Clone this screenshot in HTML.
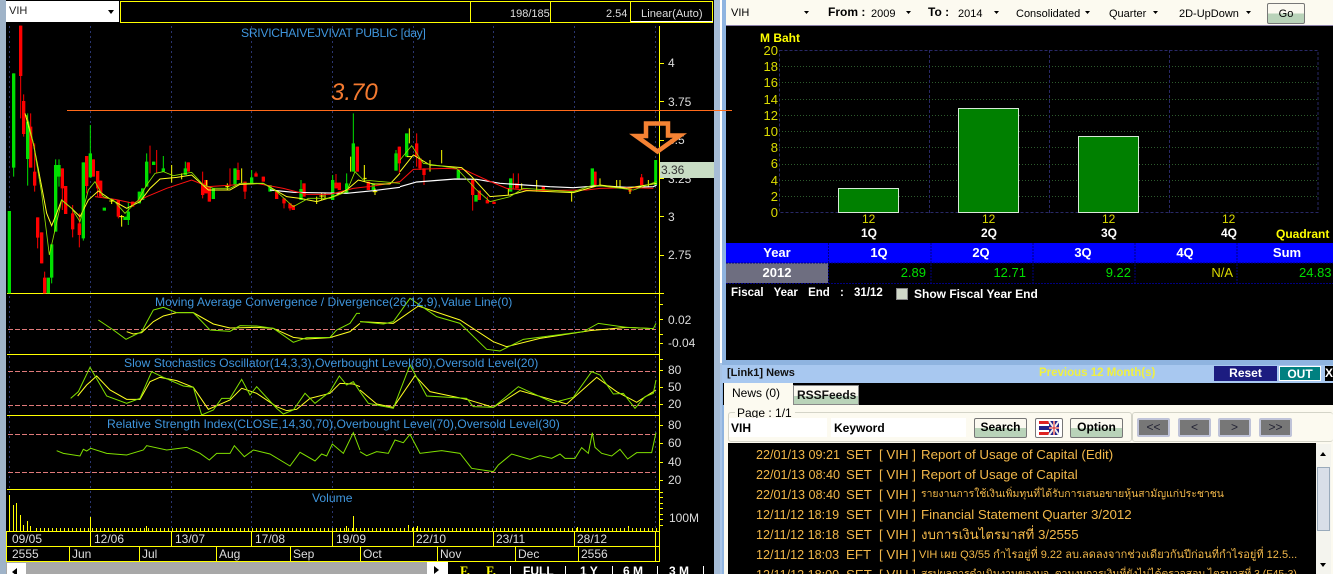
<!DOCTYPE html>
<html><head><meta charset="utf-8"><style>
html,body{margin:0;padding:0;background:#a8c4e6}
#r{position:relative;width:1333px;height:574px;overflow:hidden;font-family:"Liberation Sans","DejaVu Sans","Noto Sans CJK SC",sans-serif;font-size:12px;color:#000}
.a{position:absolute}
.t{position:absolute;white-space:nowrap;line-height:14px}
.b{font-weight:bold}
.ax{color:#ddd;font-size:12px}
.cap{color:#3f95dc;font-size:12.15px}
.y{color:#dcdc00;font-size:13px;width:24px;text-align:right}
.btn{position:absolute;box-sizing:border-box;border:1px solid #777;border-radius:2px;background:linear-gradient(#fbf9f0 50%,#b9d3b9 50%);text-align:center;font-weight:bold;line-height:17px;font-size:12px;height:20px}
.nav{position:absolute;box-sizing:border-box;top:418px;width:33px;height:19px;border:2px solid #bfc3d8;border-radius:2px;background:#777;color:#223;text-align:center;line-height:14px;font-size:12px}
.rw{position:absolute;left:0;color:#f2b84a;font-size:13.3px;white-space:nowrap;line-height:16px;height:16px}
.rw span{position:absolute;top:0}
.rw .d{left:756px;font-size:12.6px}
.c{position:absolute;box-sizing:border-box;height:20px;line-height:20px;text-align:center;color:#fff;font-weight:bold;font-size:13px}
</style></head><body><div id="r">

<!-- left pane -->
<div class="a" style="left:0;top:0;width:6px;height:574px;background:#9fb3c8"></div>
<div class="a" style="left:6px;top:0;width:708px;height:574px;background:#000"></div>
<div class="a" style="left:714px;top:0;width:6px;height:574px;background:#a6bcd6"></div>
<div class="a" style="left:720px;top:0;width:2px;height:363px;background:#fff"></div>
<div class="a" style="left:722px;top:0;width:4px;height:574px;background:#8fb4e0"></div>

<!-- symbol combo -->
<div class="a" style="left:6px;top:1px;width:113px;height:21px;background:#fff"></div>
<div class="t" style="left:9px;top:4px;font-size:11px;color:#222">VIH</div>
<div class="a" style="left:108px;top:10px;border:3.5px solid transparent;border-top:4px solid #000;border-bottom:0"></div>
<!-- top toolbar -->
<div class="a" style="left:120px;top:1px;width:593px;height:22px;box-sizing:border-box;border:1px solid #ff0"></div>
<div class="a" style="left:470px;top:1px;width:1px;height:22px;background:#ff0"></div>
<div class="a" style="left:550px;top:1px;width:1px;height:22px;background:#ff0"></div>
<div class="a" style="left:630px;top:1px;width:1px;height:22px;background:#ff0"></div>
<div class="a" style="left:631px;top:21px;width:82px;height:1px;background:#fff"></div>
<div class="t" style="left:510px;top:7px;color:#ddd;font-size:11px">198/185</div>
<div class="t" style="left:606px;top:7px;color:#ddd;font-size:11px">2.54</div>
<div class="t" style="left:641px;top:7px;color:#ddd;font-size:11.2px">Linear(Auto)</div>

<!-- chart svg -->
<svg class="a" style="left:0;top:0" width="733" height="574" viewBox="0 0 733 574" fill="none">
<g stroke="#2a3570" stroke-width="1" stroke-dasharray="2 3">
<path d="M9.5 26V531M90.5 26V531M171.5 26V531M251.500 26V531M332.500 26V531M413.500 26V531M493.500 26V531M574.500 26V531M655.500 26V531"/>
</g>
<!-- frame lines -->
<g stroke="#ff0" stroke-width="1">
<path d="M7 293.5H659M7 354.5H659M7 415.5H659M7 489.5H659M7 531.5H659M7 546.5H659M7 561.5H659M6.5 531V562M659.5 26V562"/>
<path d="M90.5 531V546M171.5 531V546M251.5 531V546M332.5 531V546M413.5 531V546M493.5 531V546M574.5 531V546M655.5 531V561"/>
<path d="M69.5 546V561M139.5 546V561M216.5 546V561M290.5 546V561M360.5 546V561M437.5 546V561M515.5 546V561M578.5 546V561"/>
<path d="M659 63.5H664M659 101.5H664M659 140.5H664M659 178.5H664M659 216.5H664M659 255.5H664M659 293.5H664M659 304.5H663M659 319.5H663M659 334.5H663M659 343.5H663M659 359.5H663M659 370.5H663M659 387.5H663M659 404.5H663M659 425.5H663M659 443.5H663M659 462.5H663M659 480.5H663M659 492.5H663M659 497.5H663M659 503.5H663M659 508.5H663M659 514.5H663M659 519.5H663M659 525.5H663"/>
</g>
<!-- dashed levels -->
<g stroke="#e07a7a" stroke-width="1" stroke-dasharray="5 2">
<path d="M8 329.5H656M8 371.5H656M8 405.5H656M8 434.5H656M8 472.5H656"/>
</g>
<!-- volume -->
<path d="M36 529.5H657" stroke="#ff0" stroke-width="3" stroke-dasharray="1 3"/>
<path d="M9.5 495V531M13.5 505V531M16.5 503V531M20.5 515V531M23.5 525V531M27.5 521V531M30.5 526V531M90.5 517V531M146.5 526V531M353.5 516V531M346.5 526V531M413.5 527V531M408.5 525V531M417.5 526V531M628.5 526V531M577.5 527V531" stroke="#ff0" stroke-width="1"/>

<!-- candles left half, zoom coords -->
<g transform="scale(.33333)">
<g stroke="#ff0000" stroke-width="3">
<path d="M62 77V355M71 283V410M92 340V503M104 430V575M113 652V745M125 697V790M134 815V880M187 505V630M197 558V642M218 615V712M238 640V742M260 468V580M280 478V530M293 513V590M302 542V590M355 600V655M398 605V620M450 437V520M470 450V520M565 487V515M608 515V595M628 560V605M618 540V580M735 545V597M714 488V540M690 505V560M768 515V530M790 530V545M830 575V597M852 595V625M870 610V632M880 615V630M912 550V590M1008 522V565M1018 548V570M1072 440V515M1105 545V570M1198 440V520"/>
</g>
<g stroke="#ff0000" stroke-width="10">
<path d="M62 77V228M71 303V402M92 380V503M104 515V557M113 652V713M125 697V790M134 833V880M187 505V565M197 558V642M218 640V688M238 670V705M260 468V558M280 478V530M293 513V565M302 542V590M355 600V650M398 605V620M565 487V515M608 550V585M628 560V605M618 540V580M735 545V575M714 510V540M768 520V530M790 530V545M830 575V597M852 595V610M870 610V625M880 615V630M912 550V590M1008 548V565M1018 548V570M1072 440V515M1105 545V570M1198 440V490"/>
</g>
<g stroke="#00e000" stroke-width="3">
<path d="M41 220V530M83 340V557M155 733V850M167 478V695M177 478V560M250 487V722M271 375V532M385 605V675M418 575V610M428 565V600M440 460V560M461 485V495M490 468V515M556 485V525M640 565V597M705 505V555M755 510V552M810 555V575M903 540V600M998 525V600M1040 520V580M1060 340V515M1120 550V570M1188 450V512"/>
</g>
<g stroke="#00e000" stroke-width="10">
<path d="M28 633V880M41 220V503M83 365V477M145 833V880M155 733V833M167 495V695M177 495V530M250 487V715M271 460V532M313 623V632M375 650V660M385 635V660M418 575V610M428 565V600M440 485V560M461 485V495M490 505V515M556 505V525M640 565V597M705 505V555M755 532V552M810 555V575M903 567V600M998 540V600M1040 550V580M1060 430V515M1120 550V570M1188 460V512"/>
</g>
<g stroke="#ff0" stroke-width="3">
<path d="M365 645V680M358 650H372M335 595V612M328 603H342M682 550V570M676 560H688M965 578V600M958 588H972M1125 565V585M1118 575H1132M1052 470V515M1093 495V545M725 505V550M975 580V595M1090 535H1100M515 495V548M545 520V538M620 540V560M950 590V612"/>
</g>
<!-- MAs -->
<path d="M810 570L880 577L1040 580L1120 572L1200 562" stroke="#fff" stroke-width="3.5"/>
<path d="M285 590L345 598L400 610L440 590L500 565L575 540L625 560L700 555L770 550L850 565L920 583L990 583L1060 565L1120 558L1200 545" stroke="#ff1010" stroke-width="3"/>
<path d="M75 340L100 430L125 560L140 640L155 677L170 640L185 600L215 625L240 650L265 600L295 573L330 597L380 625L420 605L450 565L480 537L530 532L575 525L625 570L690 570L720 553L790 550L860 590L900 595L950 605L1000 590L1040 570L1075 540L1120 552L1170 552L1200 520" stroke="#ffff20" stroke-width="3"/>
<path d="M80 345L100 430L125 580L148 765L165 690L185 600L215 625L240 665L265 570L285 545L310 590L340 600L375 640L415 600L440 555L465 520L490 515L520 527L575 517L610 555L640 565L690 565L720 550L790 550L830 575L880 620L925 595L990 595L1040 575L1065 515L1090 540L1200 550" stroke="#90e000" stroke-width="2.5"/>

<!-- indicators, left half of zoom 3 -->
<g transform="translate(0,870)" stroke-width="3">
<path d="M380 125L400 132L425 128L460 95L490 78L530 68L580 68L640 102L690 114L770 112L820 115L880 142L920 147L990 143L1050 125L1080 100" stroke="#ffff20"/>
<path d="M295 90L340 120L378 148L425 125L460 60L490 52L530 68L580 68L630 120L690 124L720 107L770 108L820 115L880 157L920 143L990 142L1010 120L1050 100L1070 70L1080 70" stroke="#80e000"/>
<path d="M233 318L260 285L290 258L330 300L380 328L420 328L450 275L480 262L530 272L580 292L625 358L690 330L725 295L770 310L830 350L860 362L890 358L930 325L990 310L1020 280L1060 282L1080 290" stroke="#ffff20"/>
<path d="M212 325L235 305L270 232L320 318L380 340L420 325L455 245L490 262L550 288L580 292L605 375L640 360L665 325L690 325L725 268L750 315L770 290L830 355L850 372L880 360L915 310L945 340L990 305L1018 258L1040 285L1060 275L1080 305" stroke="#80e000"/>
<path d="M170 482L190 490L240 498L250 478L260 483L272 475L320 490L380 495L430 480L440 467L500 480L560 472L600 490L628 510L650 490L690 490L703 467L733 500L760 480L810 492L870 528L900 487L945 513L965 492L980 498L997 462L1030 490L1060 428L1080 480" stroke="#80e000"/>
</g>
</g>
<g transform="translate(360,290) scale(.33333)" stroke-width="3">
<path d="M0 95L100 100L175 48L300 90L400 155L440 170L540 145L690 122L800 112L880 116" stroke="#ffff20"/>
<path d="M0 95L70 102L100 95L150 25L230 80L300 100L380 178L420 183L490 148L670 125L715 100L800 112L880 116L888 100" stroke="#80e000"/>
<path d="M0 300L50 342L100 352L165 257L210 305L320 328L400 352L480 302L620 342L710 262L770 305L830 337L880 305L888 300" stroke="#ffff20"/>
<path d="M0 305L25 340L100 355L150 225L200 318L320 325L340 350L400 352L475 290L580 338L640 322L695 245L720 255L760 312L790 310L825 355L855 320L880 310L888 270" stroke="#80e000"/>
<path d="M0 485L20 497L50 485L85 490L105 450L130 458L150 433L180 490L245 482L300 490L335 535L400 545L415 525L455 492L510 508L540 497L575 505L600 492L615 505L645 505L665 473L685 490L697 428L705 472L725 490L755 498L780 478L803 507L830 488L875 488L888 428" stroke="#80e000"/>
</g>
<g transform="translate(400,0) scale(.33333)">
<g stroke="#ff0000" stroke-width="3"><path d="M50 400V500M60 475V510M72 505V555M218 540V632M238 572V600M262 590V610M282 605V612M340 520V565M355 520V565M430 558V575M585 515V555M725 522V555M690 565V580"/></g>
<g stroke="#ff0000" stroke-width="10"><path d="M50 430V470M60 475V505M72 505V525M218 540V585M238 572V600M262 600V610M282 605V612M350 550V565M430 558V575M585 515V555M725 532V555M690 565V575"/></g>
<g stroke="#00e000" stroke-width="10"><path d="M20 400V470M175 510V535M228 585V605M332 535V575M577 505V560"/></g>
<path d="M767 480V555" stroke="#00e000" stroke-width="9"/>
<g stroke="#ff0" stroke-width="3"><path d="M28 385V430M90 480V515M125 450V490M515 575V605M410 540V575M650 540V565M745 540V560M660 540V560M600 535V555M325 565V585M365 550V570M20 470H36M690 570V582"/></g>
<path d="M0 560L50 546L165 537L230 538L300 550L450 560L520 563L600 557L680 562L760 560L770 555" stroke="#fff" stroke-width="3.5"/>
<path d="M0 545L40 508L140 505L190 508L260 540L320 565L400 572L560 570L600 565L700 563L760 565" stroke="#ff1010" stroke-width="3"/>
<path d="M0 515L40 465L90 495L185 503L215 530L270 590L330 585L380 572L520 578L600 555L680 565L770 550" stroke="#ffff20" stroke-width="3"/>
<path d="M0 480L35 437L70 490L170 505L230 570L270 605L330 590L370 565L520 575L580 555L700 570L770 545" stroke="#90e000" stroke-width="2.5"/>
</g>
<!-- orange line -->
<path d="M67 110.5H732" stroke="#ff6a1a" stroke-width="1"/>
</svg>

<!-- labels -->
<div class="t cap" style="left:241px;top:26px;letter-spacing:-.28px">SRIVICHAIVEJVIVAT PUBLIC [day]</div>
<div class="t" style="left:331px;top:80px;font-size:24px;line-height:26px;font-style:italic;color:#f47a30">3.70</div>
<div class="t cap" style="left:155px;top:295px">Moving Average Convergence / Divergence(26,12,9),Value Line(0)</div>
<div class="t cap" style="left:124px;top:356px">Slow Stochastics Oscillator(14,3,3),Overbought Level(80),Oversold Level(20)</div>
<div class="t cap" style="left:107px;top:417px">Relative Strength Index(CLOSE,14,30,70),Overbought Level(70),Oversold Level(30)</div>
<div class="t cap" style="left:312px;top:491px">Volume</div>
<div class="t ax" style="left:668px;top:56px">4</div>
<div class="t ax" style="left:668px;top:95px">3.75</div>
<div class="t ax" style="left:668px;top:133px">3.5</div>
<div class="t ax" style="left:668px;top:210px">3</div>
<div class="t ax" style="left:668px;top:248px">2.75</div>
<div class="t ax" style="left:668px;top:172px">3.25</div>
<div class="a" style="left:660px;top:162px;width:54px;height:16px;background:#c8dcc4"></div>
<div class="t" style="left:661px;top:163px;color:#333">3.36</div>
<div class="t ax" style="left:668px;top:313px">0.02</div>
<div class="t ax" style="left:668px;top:336px">-0.04</div>
<div class="t ax" style="left:668px;top:363px">80</div>
<div class="t ax" style="left:668px;top:380px">50</div>
<div class="t ax" style="left:668px;top:397px">20</div>
<div class="t ax" style="left:668px;top:418px">80</div>
<div class="t ax" style="left:668px;top:436px">60</div>
<div class="t ax" style="left:668px;top:455px">40</div>
<div class="t ax" style="left:668px;top:473px">20</div>
<div class="t ax" style="left:669px;top:511px">100M</div>
<div class="t ax" style="left:12px;top:532px">09/05</div>
<div class="t ax" style="left:94px;top:532px">12/06</div>
<div class="t ax" style="left:175px;top:532px">13/07</div>
<div class="t ax" style="left:255px;top:532px">17/08</div>
<div class="t ax" style="left:336px;top:532px">19/09</div>
<div class="t ax" style="left:416px;top:532px">22/10</div>
<div class="t ax" style="left:496px;top:532px">23/11</div>
<div class="t ax" style="left:577px;top:532px">28/12</div>
<div class="t ax" style="left:12px;top:547px">2555</div>
<div class="t ax" style="left:72px;top:547px">Jun</div>
<div class="t ax" style="left:142px;top:547px">Jul</div>
<div class="t ax" style="left:219px;top:547px">Aug</div>
<div class="t ax" style="left:293px;top:547px">Sep</div>
<div class="t ax" style="left:363px;top:547px">Oct</div>
<div class="t ax" style="left:440px;top:547px">Nov</div>
<div class="t ax" style="left:518px;top:547px">Dec</div>
<div class="t ax" style="left:581px;top:547px">2556</div>

<!-- arrow -->
<svg class="a" style="left:625px;top:115px" width="70" height="45" fill="none"><path d="M21 8.500H43V20.500H55L32.500 36.500L11 21H21Z" stroke="#f58233" stroke-width="4.500"/></svg>

<!-- scrollbar + bottom toolbar -->
<div class="a" style="left:6px;top:562px;width:421px;height:12px;background:#a8a8a8"></div>
<div class="a" style="left:7px;top:563px;width:19px;height:11px;background:#fff"></div>
<div class="a" style="left:12px;top:568px;border:4px solid transparent;border-right:5px solid #000;border-left:0"></div>
<div class="a" style="left:427px;top:562px;width:21px;height:12px;background:#fff"></div>
<div class="a" style="left:434px;top:566px;border:4px solid transparent;border-left:5px solid #000;border-right:0"></div>
<div class="t b" style="left:460px;top:563px;color:#ff0;font:bold 13px 'Liberation Serif',serif">F.</div>
<div class="t b" style="left:486px;top:563px;color:#ff0;font:bold 13px 'Liberation Serif',serif">F.</div>
<div class="t b" style="left:523px;top:564px;color:#fff">FULL</div>
<div class="t b" style="left:580px;top:564px;color:#fff">1 Y</div>
<div class="t b" style="left:623px;top:564px;color:#fff">6 M</div>
<div class="t b" style="left:669px;top:564px;color:#fff">3 M</div>
<div class="a" style="left:510px;top:566px;width:1px;height:8px;background:#fff"></div>
<div class="a" style="left:565px;top:566px;width:1px;height:8px;background:#fff"></div>
<div class="a" style="left:612px;top:566px;width:1px;height:8px;background:#fff"></div>
<div class="a" style="left:657px;top:566px;width:1px;height:8px;background:#fff"></div>
<div class="a" style="left:703px;top:566px;width:1px;height:8px;background:#fff"></div>

<!-- right pane -->
<div class="a" style="left:726px;top:0;width:607px;height:360px;background:#000"></div>
<div class="a" style="left:722px;top:110px;width:10px;height:1px;background:#ff6a1a"></div>
<div class="a" style="left:726px;top:0;width:607px;height:26px;background:#fcfaf0"></div>
<div class="a" style="left:726px;top:25px;width:607px;height:1px;background:#8a7fa8"></div>
<div class="t" style="left:731px;top:6px;font-size:11px">VIH</div>
<div class="t b" style="left:828px;top:5px;font-size:12px">From :</div>
<div class="t" style="left:871px;top:7px;font-size:11px">2009</div>
<div class="t b" style="left:928px;top:5px;font-size:12px">To :</div>
<div class="t" style="left:958px;top:7px;font-size:11px">2014</div>
<div class="t" style="left:1016px;top:7px;font-size:11px">Consolidated</div>
<div class="t" style="left:1109px;top:7px;font-size:11px">Quarter</div>
<div class="t" style="left:1179px;top:7px;font-size:11px">2D-UpDown</div>
<svg class="a" style="left:726px;top:0" width="607" height="26"><path d="M79 11h5l-2.500 3zM181 11h5l-2.500 3zM269 11h5l-2.500 3zM360 11h5l-2.500 3zM428 11h5l-2.500 3zM521 11h5l-2.500 3z" fill="#000" transform="translate(-1,0)"/></svg>
<div class="btn" style="left:1267px;top:3px;width:38px;font-weight:normal;font-size:11px;line-height:20px;height:21px">Go</div>

<!-- bar chart -->
<svg class="a" style="left:726px;top:26px" width="607" height="200" fill="none">
<g transform="translate(-726,-26)">
<g stroke="#2c5a2c" stroke-dasharray="1 2"><path d="M779 66.500H1318M779 82.500H1318M779 99.500H1318M779 115.500H1318M779 131.500H1318M779 147.500H1318M779 164.500H1318M779 180.500H1318M779 196.500H1318"/></g>
<g stroke="#282866" stroke-dasharray="3 2"><path d="M779.500 50.500H1318V212.500H779.500ZM929.500 50V213M1049.500 50V213M1169.500 50V213"/></g>
<g fill="#008000" stroke="#d8e8d8"><rect x="838.500" y="188.500" width="60" height="24"/><rect x="958.500" y="108.500" width="60" height="104"/><rect x="1078.500" y="136.500" width="60" height="76"/></g>
</g></svg>
<div class="t b" style="left:760px;top:31px;color:#ff0;font-size:12px">M Baht</div>
<div class="t y" style="left:754px;top:44px">20</div>
<div class="t y" style="left:754px;top:60px">18</div>
<div class="t y" style="left:754px;top:76px">16</div>
<div class="t y" style="left:754px;top:93px">14</div>
<div class="t y" style="left:754px;top:109px">12</div>
<div class="t y" style="left:754px;top:125px">10</div>
<div class="t y" style="left:754px;top:141px">8</div>
<div class="t y" style="left:754px;top:157px">6</div>
<div class="t y" style="left:754px;top:174px">4</div>
<div class="t y" style="left:754px;top:190px">2</div>
<div class="t y" style="left:754px;top:206px">0</div>
<div class="t" style="left:862px;top:212px;color:#dcdc00">12</div>
<div class="t" style="left:982px;top:212px;color:#dcdc00">12</div>
<div class="t" style="left:1102px;top:212px;color:#dcdc00">12</div>
<div class="t" style="left:1222px;top:212px;color:#dcdc00">12</div>
<div class="t b" style="left:861px;top:226px;color:#fff">1Q</div>
<div class="t b" style="left:981px;top:226px;color:#fff">2Q</div>
<div class="t b" style="left:1101px;top:226px;color:#fff">3Q</div>
<div class="t b" style="left:1221px;top:226px;color:#fff">4Q</div>
<div class="t b" style="left:1276px;top:227px;color:#ff0">Quadrant</div>

<!-- table -->
<div class="a" style="left:726px;top:243px;width:607px;height:20px;background:#0000ff"></div>
<div class="c" style="left:726px;top:243px;width:102px">Year</div>
<div class="c" style="left:828px;top:243px;width:102px">1Q</div>
<div class="c" style="left:930px;top:243px;width:102px">2Q</div>
<div class="c" style="left:1032px;top:243px;width:102px">3Q</div>
<div class="c" style="left:1134px;top:243px;width:102px">4Q</div>
<div class="c" style="left:1236px;top:243px;width:102px">Sum</div>
<div class="a" style="left:726px;top:263px;width:102px;height:20px;background:#6e6e80"></div>
<div class="c" style="left:726px;top:263px;width:102px">2012</div>
<div class="t" style="left:828px;top:266px;width:98px;text-align:right;color:#00e000;font-size:13px">2.89</div>
<div class="t" style="left:930px;top:266px;width:96px;text-align:right;color:#00e000;font-size:13px">12.71</div>
<div class="t" style="left:1032px;top:266px;width:99px;text-align:right;color:#00e000;font-size:13px">9.22</div>
<div class="t" style="left:1134px;top:266px;width:99px;text-align:right;color:#dcdc00;font-size:13px">N/A</div>
<div class="t" style="left:1299px;top:266px;color:#00e000;font-size:13px">24.83</div>
<svg class="a" style="left:726px;top:243px" width="607" height="41" fill="none"><path d="M102.500 0V40M205 0V40M307 0V40M409 0V40M511 0V40M0 40.500H607M0 20H607" stroke="#000080" stroke-dasharray="2 1"/></svg>
<div class="t" style="left:731px;top:286px;color:#fff;font-size:11.500px;word-spacing:7px;font-weight:bold">Fiscal Year End : 31/12</div>
<div class="a" style="left:896px;top:288px;width:12px;height:12px;background:#d0d8c8;border:1px solid #888;box-sizing:border-box"></div>
<div class="t" style="left:914px;top:287px;color:#fff;font-size:12px;font-weight:bold">Show Fiscal Year End</div>

<!-- news header -->
<div class="a" style="left:726px;top:360px;width:607px;height:5px;background:#8fb4e0"></div>
<div class="a" style="left:722px;top:365px;width:611px;height:18px;background:#a8c8f0"></div>
<div class="t b" style="left:727px;top:366px;font-size:11px;color:#111">[Link1] News</div>
<div class="t b" style="left:1039px;top:366px;color:#f0f040;font-size:11.500px">Previous 12 Month(s)</div>
<div class="a" style="left:1214px;top:366px;width:63px;height:15px;background:#1c1c80;color:#fff;text-align:center;font-weight:bold;line-height:15px;font-size:12px">Reset</div>
<div class="a" style="left:1279px;top:366px;width:42px;height:15px;background:#008080;color:#fff;text-align:center;font-weight:bold;line-height:15px;font-size:12px;box-sizing:border-box;border:1px solid #fff">OUT</div>
<div class="a" style="left:1325px;top:366px;width:8px;height:15px;background:#000;color:#fff;font-weight:bold;line-height:15px;font-size:12px">X</div>
<!-- tab band -->
<div class="a" style="left:723px;top:383px;width:610px;height:22px;background:#000"></div>
<div class="a" style="left:724px;top:383px;width:69px;height:22px;background:#fcfaf0"></div>
<div class="t" style="left:732px;top:386px;font-size:12px">News (0)</div>
<div class="a" style="left:793px;top:385px;width:66px;height:20px;box-sizing:border-box;background:linear-gradient(#fbf9f0 55%,#b9d3b9 55%);border:1px solid #888"></div>
<div class="t b" style="left:797px;top:388px;font-size:12px;color:#111">RSSFeeds</div>
<!-- toolbar panel -->
<div class="a" style="left:724px;top:405px;width:609px;height:169px;background:#fcfaf0"></div>
<div class="a" style="left:728px;top:412px;width:404px;height:30px;box-sizing:border-box;border:1px solid #d4d4c8;border-radius:3px"></div>
<div class="a" style="left:1132px;top:412px;width:201px;height:30px;box-sizing:border-box;border:1px solid #d4d4c8;border-right:0;border-radius:3px"></div>
<div class="t" style="left:735px;top:406px;font-size:12px;background:#fcfaf0;padding:0 3px 0 2px">Page : 1/1</div>
<div class="a" style="left:729px;top:418px;width:98px;height:19px;background:#fff"></div>
<div class="a" style="left:831px;top:418px;width:135px;height:19px;background:#fff"></div>
<div class="t b" style="left:731px;top:421px;font-size:12px">VIH</div>
<div class="t b" style="left:834px;top:421px;font-size:12px">Keyword</div>
<div class="btn" style="left:974px;top:418px;width:53px">Search</div>
<div class="a" style="left:1035px;top:418px;width:28px;height:20px;box-sizing:border-box;border:1px solid #777;border-radius:2px;background:#fff"></div>
<svg class="a" style="left:1039px;top:421px" width="20" height="14"><rect width="10" height="14" fill="#d22"/><rect y="3" width="10" height="8" fill="#fff"/><rect y="5" width="10" height="4" fill="#228"/><rect x="10" width="10" height="14" fill="#228"/><path d="M10 0L20 14M20 0L10 14M15 0V14M10 7H20" stroke="#eee" stroke-width="2"/><path d="M15 0V14M10 7H20" stroke="#d22" stroke-width="1"/></svg>
<div class="btn" style="left:1070px;top:418px;width:53px">Option</div>
<div class="nav" style="left:1137px">&lt;&lt;</div>
<div class="nav" style="left:1178px">&lt;</div>
<div class="nav" style="left:1218px">&gt;</div>
<div class="nav" style="left:1259px">&gt;&gt;</div>

<!-- news list -->
<div class="a" style="left:728px;top:443px;width:588px;height:131px;background:#000"></div>
<div class="a" style="left:1316px;top:444px;width:15px;height:130px;background:#f4f4ee"></div>
<div class="a" style="left:1317px;top:467px;width:13px;height:64px;box-sizing:border-box;background:#d8dee8;border:1px solid #9ab"></div>
<div class="a" style="left:1320px;top:452px;border:3.500px solid transparent;border-bottom:4px solid #000;border-top:0"></div>
<div class="a" style="left:1320px;top:563px;border:3.500px solid transparent;border-top:4px solid #000;border-bottom:0"></div>
<div class="rw" style="top:447px"><span class="d">22/01/13 09:21</span><span style="left:846px">SET</span><span style="left:879px">[ VIH ]</span><span style="left:921px">Report of Usage of Capital (Edit)</span></div>
<div class="rw" style="top:467px"><span class="d">22/01/13 08:40</span><span style="left:846px">SET</span><span style="left:879px">[ VIH ]</span><span style="left:921px">Report of Usage of Capital</span></div>
<div class="rw" style="top:487px"><span class="d">22/01/13 08:40</span><span style="left:846px">SET</span><span style="left:879px">[ VIH ]</span><span style="left:921px;font-size:10.400px">รายงานการใช้เงินเพิ่มทุนที่ได้รับการเสนอขายหุ้นสามัญแก่ประชาชน</span></div>
<div class="rw" style="top:507px"><span class="d">12/11/12 18:19</span><span style="left:846px">SET</span><span style="left:879px">[ VIH ]</span><span style="left:921px">Financial Statement Quarter 3/2012</span></div>
<div class="rw" style="top:527px"><span class="d">12/11/12 18:18</span><span style="left:846px">SET</span><span style="left:879px">[ VIH ]</span><span style="left:921px">งบการเงินไตรมาสที่ 3/2555</span></div>
<div class="rw" style="top:547px"><span class="d">12/11/12 18:03</span><span style="left:846px">EFT</span><span style="left:879px">[ VIH ]</span><span style="left:919px;font-size:11px">VIH เผย Q3/55 กำไรอยู่ที่ 9.22 ลบ.ลดลงจากช่วงเดียวกันปีก่อนที่กำไรอยู่ที่ 12.5...</span></div>
<div class="rw" style="top:567px"><span class="d">12/11/12 18:00</span><span style="left:846px">SET</span><span style="left:879px">[ VIH ]</span><span style="left:921px;font-size:10.400px">สรุปผลการดำเนินงานของบจ. ตามงบการเงินที่ยังไม่ได้ตรวจสอบ ไตรมาสที่ 3 (F45-3)</span></div>
</div></body></html>
